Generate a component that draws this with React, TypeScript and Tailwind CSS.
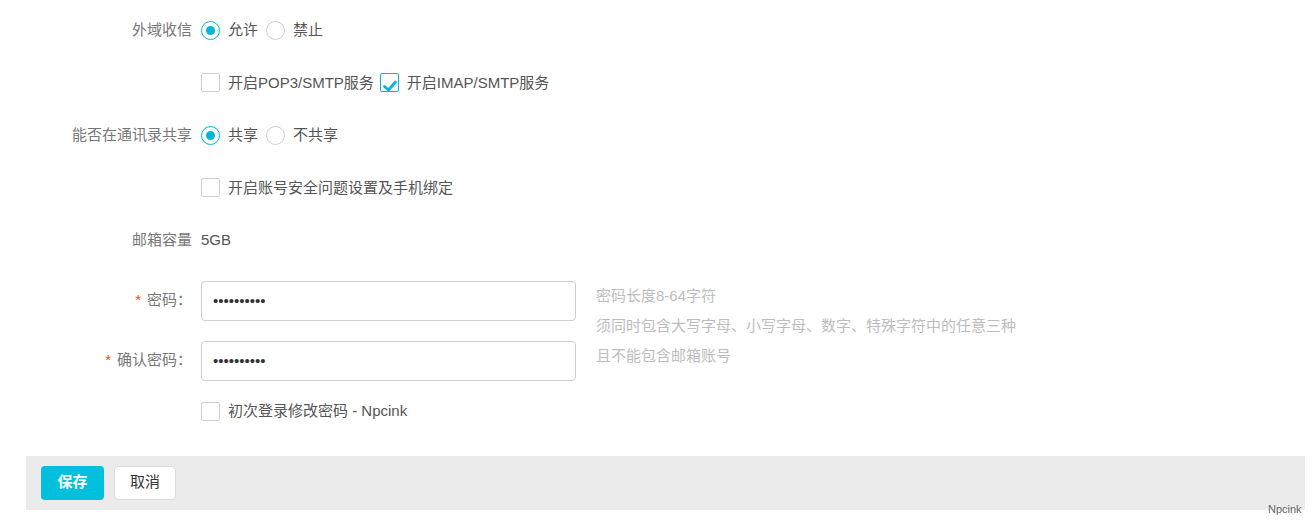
import React from "react";

const FONT = { fontFamily: '"Liberation Sans", "Noto Sans CJK SC", sans-serif' };

function Radio({ checked, label }: { checked?: boolean; label: string }) {
  return (
    <label className="flex items-center mr-[8px]">
      <span
        className={
          "flex items-center justify-center w-[19px] h-[19px] rounded-full border bg-white " +
          (checked ? "border-[#00b7d8] border-[1.5px]" : "border-[#cfcfcf]")
        }
      >
        {checked && <span className="w-[9px] h-[9px] rounded-full bg-[#00b7d8]" />}
      </span>
      <span className="ml-[8px] text-[#555]">{label}</span>
    </label>
  );
}

function Checkbox({ checked, label }: { checked?: boolean; label: string }) {
  return (
    <label className="flex items-center mr-[6px]">
      <span
        className={
          "relative flex items-center justify-center w-[19px] h-[19px] rounded-[2px] border bg-white " +
          (checked ? "border-[#00b7d8]" : "border-[#cfcfcf]")
        }
      >
        {checked && (
          <svg width="16" height="16" viewBox="0 0 16 16" className="absolute left-[1px] top-[3px]">
            <path d="M2.5 9.5 L6.5 13 L13.5 5" fill="none" stroke="#00b7d8" strokeWidth="2.8" strokeLinecap="round" strokeLinejoin="round" />
          </svg>
        )}
      </span>
      <span className="ml-[8px] text-[#555]">{label}</span>
    </label>
  );
}

function Row({ label, children }: { label?: React.ReactNode; children: React.ReactNode }) {
  return (
    <div className="flex items-center h-[52.5px]">
      <div className="w-[192px] text-right text-[#777] pr-0 whitespace-nowrap">{label}</div>
      <div className="ml-[9px] flex items-center">{children}</div>
    </div>
  );
}

export default function App() {
  return (
    <div className="relative w-[1313px] h-[525px] bg-white text-[15px] overflow-hidden" style={FONT}>
      <div className="pt-[4px]">
        <Row label="外域收信">
          <Radio checked label="允许" />
          <Radio label="禁止" />
        </Row>
        <Row>
          <Checkbox label="开启POP3/SMTP服务" />
          <Checkbox checked label="开启IMAP/SMTP服务" />
        </Row>
        <Row label="能否在通讯录共享">
          <Radio checked label="共享" />
          <Radio label="不共享" />
        </Row>
        <Row>
          <Checkbox label="开启账号安全问题设置及手机绑定" />
        </Row>
        <Row label="邮箱容量">
          <span className="text-[#555]">5GB</span>
        </Row>
      </div>

      <div className="flex mt-[14px]">
        <div className="flex flex-col gap-[20px]">
          <div className="flex items-center">
            <div className="w-[192px] text-right text-[#777]">
              <span className="text-[#e0502a] mr-[6px]">*</span>密码：
            </div>
            <input
              type="password"
              readOnly
              defaultValue="1234567890"
              className="ml-[9px] w-[375px] h-[40px] border border-[#cfcfcf] rounded-[4px] px-[11px] text-[#333] outline-none"
              style={FONT}
            />
          </div>
          <div className="flex items-center">
            <div className="w-[192px] text-right text-[#777]">
              <span className="text-[#e0502a] mr-[6px]">*</span>确认密码：
            </div>
            <input
              type="password"
              readOnly
              defaultValue="1234567890"
              className="ml-[9px] w-[375px] h-[40px] border border-[#cfcfcf] rounded-[4px] px-[11px] text-[#333] outline-none"
              style={FONT}
            />
          </div>
        </div>
        <div className="ml-[20px] text-[#bdbdbd] text-[15px] leading-[30px]">
          <div>密码长度8-64字符</div>
          <div>须同时包含大写字母、小写字母、数字、特殊字符中的任意三种</div>
          <div>且不能包含邮箱账号</div>
        </div>
      </div>

      <div className="flex items-center h-[40px] mt-[11px]">
        <div className="w-[192px]" />
        <div className="ml-[9px] flex items-center">
          <Checkbox label="初次登录修改密码 - Npcink" />
        </div>
      </div>

      <div className="mt-[24px] ml-[26px] w-[1279px] h-[54px] bg-[#ebebeb] flex items-center px-[15px] gap-[10px]">
        <button className="w-[63px] h-[34px] rounded-[4px] bg-[#00c0dd] text-white font-bold text-[15px]" style={FONT}>
          保存
        </button>
        <button className="w-[62px] h-[34px] rounded-[4px] bg-white border border-[#d9d9d9] text-[#333] text-[15px]" style={FONT}>
          取消
        </button>
      </div>

      <div className="absolute left-[1268px] top-[501px] text-[11px] text-[#666]">Npcink</div>
    </div>
  );
}
